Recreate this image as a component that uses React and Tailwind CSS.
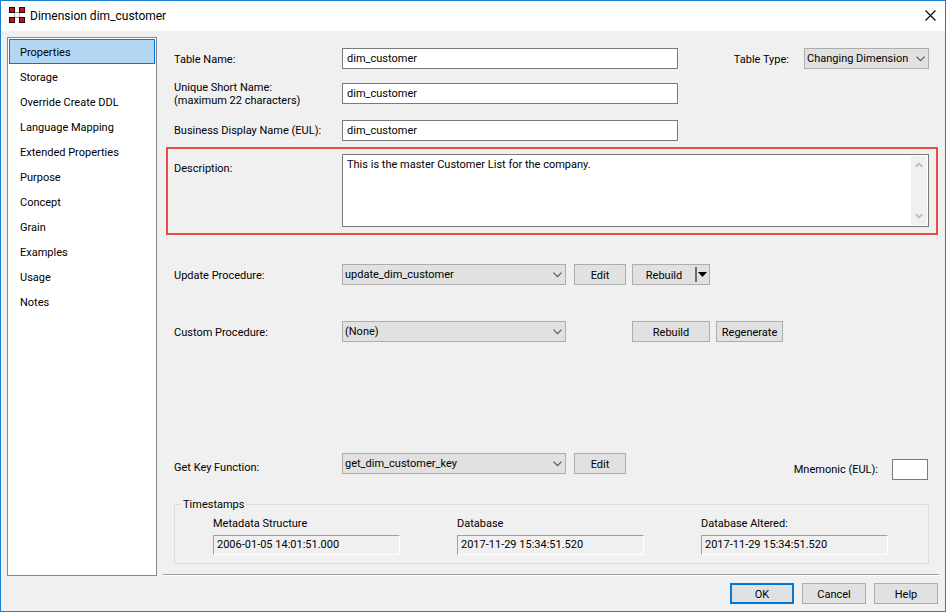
import { useState } from "react";

const sections = [
	"Properties",
	"Storage",
	"Override Create DDL",
	"Language Mapping",
	"Extended Properties",
	"Purpose",
	"Concept",
	"Grain",
	"Examples",
	"Usage",
	"Notes",
];

const timestamps = [
	{ id: "metadata", label: "Metadata Structure", value: "2006-01-05 14:01:51.000" },
	{ id: "database", label: "Database", value: "2017-11-29 15:34:51.520" },
	{ id: "altered", label: "Database Altered:", value: "2017-11-29 15:34:51.520" },
];

function AppIcon() {
	return (
		<svg width="16" height="16" viewBox="0 0 16 16" shapeRendering="crispEdges">
			<path d="M5.5 5.5h5v5h-5z" fill="#fff" stroke="#c9b9bb" />
			<path d="M6 5.5h4M6 10.5h4" stroke="#999" fill="none" />
			<g fill="#c8101c" stroke="#2a0508">
				<rect x="0.5" y="0.5" width="5" height="5" />
				<rect x="10.5" y="0.5" width="5" height="5" />
				<rect x="0.5" y="10.5" width="5" height="5" />
				<rect x="10.5" y="10.5" width="5" height="5" />
			</g>
		</svg>
	);
}

function TextField({ id, defaultValue, className = "w-full" }) {
	return (
		<input
			id={id}
			type="text"
			defaultValue={defaultValue}
			className={`h-[21px] border border-[#7a7a7a] bg-white px-1 outline-none ${className}`}
		/>
	);
}

function Dropdown({ id, options, className }) {
	return (
		<div className={`relative ${className}`}>
			<select
				id={id}
				className="block h-[21px] w-full appearance-none border border-[#adadad] bg-[#e1e1e1] pr-5 pl-0.5 leading-[19px] outline-none"
			>
				{options.map((option) => (
					<option key={option}>{option}</option>
				))}
			</select>
			<svg
				className="pointer-events-none absolute top-2 right-1"
				width="9"
				height="6"
				viewBox="0 0 9 6"
			>
				<path d="M0.5 0.7l4 4 4-4" fill="none" stroke="#555" strokeWidth="1.2" />
			</svg>
		</div>
	);
}

function Button({ children, className }) {
	return (
		<button
			type="button"
			className={`h-[21px] border border-[#adadad] bg-[#e1e1e1] pt-0.5 ${className}`}
		>
			{children}
		</button>
	);
}

function ScrollArrow({ className = "" }) {
	return (
		<svg className={className} width="8" height="6" viewBox="0 0 8 6">
			<path d="M0.8 4.8L4 1.6l3.2 3.2" fill="none" stroke="#bfbfbf" strokeWidth="2" />
		</svg>
	);
}

export default function App() {
	const [active, setActive] = useState("Properties");

	return (
		<div className="flex min-h-screen flex-col bg-white pb-[3px] font-[Roboto,sans-serif] text-[11px] leading-[13px] text-black">
			<div className="flex flex-1 flex-col border border-[#1a7fd4] bg-[#f0f0f0]">
				{/* Title bar */}
				<header className="flex h-[30px] items-center bg-white pr-[7px] pb-0.5 pl-2">
					<AppIcon />
					<h1 className="ml-[5px] flex-1 pt-0.5 text-xs">Dimension dim_customer</h1>
					<button type="button" aria-label="Close" className="p-0.5">
						<svg width="11" height="11" viewBox="0 0 11 11">
							<path d="M0.5 0.5l10 10M10.5 0.5l-10 10" stroke="#000" strokeWidth="1.1" />
						</svg>
					</button>
				</header>

				<div className="flex flex-1 gap-1.5 px-1.5 pt-1.5">
					{/* Sections */}
					<nav className="w-[150px] shrink-0 border border-[#828790] bg-white p-px">
						{sections.map((section) => (
							<button
								key={section}
								type="button"
								onClick={() => setActive(section)}
								className={`block h-[25px] w-full border pt-0.5 pl-2.5 text-left ${
									active === section
										? "border-[#0078d7] bg-[#b3d7f3]"
										: "border-transparent"
								}`}
							>
								{section}
							</button>
						))}
					</nav>

					<main className="flex flex-1 flex-col pt-[11px]">
						<div className="grid grid-cols-[168px_1fr_251px] items-center pr-2.5 pl-[11px]">
							<label htmlFor="tableName" className="pt-0.5">
								Table Name:
							</label>
							<TextField id="tableName" defaultValue="dim_customer" />
							<div className="flex items-center justify-end">
								<label htmlFor="tableType" className="mr-[15px] pt-0.5">
									Table Type:
								</label>
								<Dropdown
									id="tableType"
									options={["Changing Dimension", "Dimension"]}
									className="w-[125px]"
								/>
							</div>
						</div>
						<div className="mt-2.5 grid grid-cols-[168px_1fr_251px] items-center pr-2.5 pl-[11px]">
							<label htmlFor="shortName" className="pt-0.5">
								Unique Short Name:
								<br />
								(maximum 22 characters)
							</label>
							<TextField id="shortName" defaultValue="dim_customer" />
						</div>
						<div className="mt-[13px] grid grid-cols-[168px_1fr_251px] items-center pr-2.5 pl-[11px]">
							<label htmlFor="displayName">Business Display Name (EUL):</label>
							<TextField id="displayName" defaultValue="dim_customer" />
						</div>

						{/* Description */}
						<div className="mt-1.5 mr-px ml-[3px] flex border-2 border-[#e84a46] pt-[5px] pr-[7px] pb-1.5 pl-1.5">
							<label htmlFor="description" className="w-[168px] shrink-0 pt-2">
								Description:
							</label>
							<div className="flex h-[73px] flex-1 border border-[#7a7a7a] bg-white p-px">
								<textarea
									id="description"
									defaultValue="This is the master Customer List for the company."
									className="flex-1 resize-none overflow-hidden px-[3px] pt-0.5 outline-none"
								/>
								<div
									aria-hidden="true"
									className="flex w-4 flex-col items-center justify-between bg-[#f0f0f0] py-1.5"
								>
									<ScrollArrow />
									<ScrollArrow className="rotate-180" />
								</div>
							</div>
						</div>

						{/* Procedures */}
						<div className="mt-[29px] flex items-center pl-[11px]">
							<label htmlFor="updateProcedure" className="w-[168px] pt-0.5">
								Update Procedure:
							</label>
							<Dropdown
								id="updateProcedure"
								options={["update_dim_customer", "(None)"]}
								className="w-56"
							/>
							<Button className="ml-2 w-[52px]">Edit</Button>
							<div className="ml-1.5 flex h-[21px] w-[78px] items-center border border-[#adadad] bg-[#e1e1e1]">
								<button type="button" className="flex-1 pt-0.5">
									Rebuild
								</button>
								<button
									type="button"
									aria-label="Rebuild options"
									className="flex h-[15px] items-center border-l-2 border-[#6d6d6d] pr-0.5 pl-px"
								>
									<svg width="9" height="5" viewBox="0 0 9 5">
										<path d="M0 0h9L4.5 5z" />
									</svg>
								</button>
							</div>
						</div>
						<div className="mt-9 flex items-center pl-[11px]">
							<label htmlFor="customProcedure" className="w-[168px] pt-0.5">
								Custom Procedure:
							</label>
							<Dropdown
								id="customProcedure"
								options={["(None)", "custom_dim_customer"]}
								className="w-56"
							/>
							<Button className="ml-[66px] w-[78px]">Rebuild</Button>
							<Button className="ml-1.5 w-[67px]">Regenerate</Button>
						</div>

						{/* Key function */}
						<div className="mt-auto flex items-start pr-[11px] pl-[11px]">
							<label htmlFor="keyFunction" className="w-[168px] self-center pt-0.5">
								Get Key Function:
							</label>
							<Dropdown
								id="keyFunction"
								options={["get_dim_customer_key", "(None)"]}
								className="w-56"
							/>
							<Button className="ml-2 w-[52px]">Edit</Button>
							<div className="mt-1.5 ml-auto flex items-center">
								<label htmlFor="mnemonic" className="mr-3.5">
									Mnemonic (EUL):
								</label>
								<TextField id="mnemonic" className="w-9" />
							</div>
						</div>

						{/* Timestamps */}
						<fieldset className="mt-[18px] mr-2.5 mb-2.5 ml-[11px] border border-[#dcdcdc] pr-10 pb-2 pl-[38px]">
							<legend className="-ml-8 px-0.5">Timestamps</legend>
							<div className="flex justify-between pt-1.5">
								{timestamps.map((stamp) => (
									<div key={stamp.id} className="w-[187px]">
										<label htmlFor={stamp.id} className="block">
											{stamp.label}
										</label>
										<input
											id={stamp.id}
											type="text"
											readOnly
											value={stamp.value}
											className="mt-[5px] block h-5 w-full border border-t-[#a0a0a0] border-r-white border-b-white border-l-[#a0a0a0] px-[3px] pb-0.5 outline-none"
										/>
									</div>
								))}
							</div>
						</fieldset>
						<hr className="border-t border-b border-t-[#a0a0a0] border-b-white" />
					</main>
				</div>

				<footer className="flex justify-end gap-2 px-[7px] py-[7px]">
					<button
						type="button"
						className="h-[21px] w-16 border-2 border-[#0078d7] bg-[#e1e1e1] pt-0.5"
					>
						OK
					</button>
					<Button className="w-16">Cancel</Button>
					<Button className="w-16">Help</Button>
				</footer>
			</div>
		</div>
	);
}
